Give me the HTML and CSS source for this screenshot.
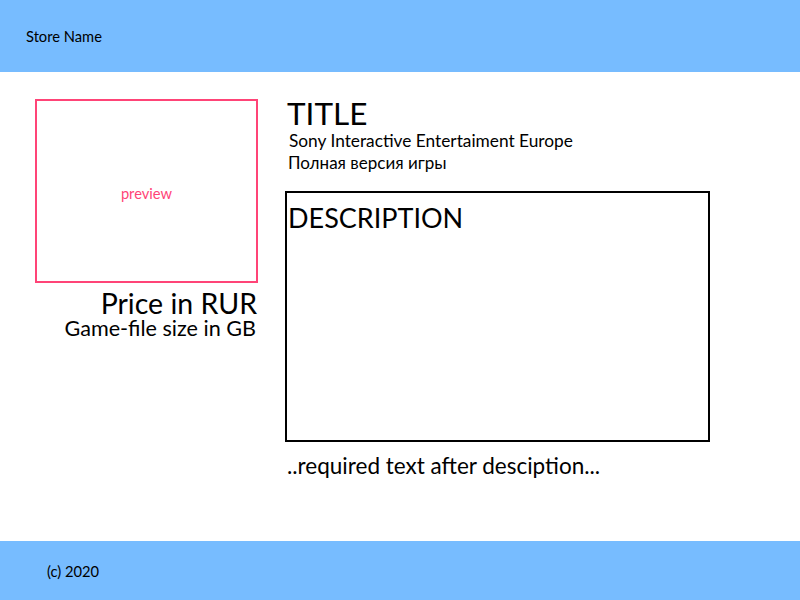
FILE: index.html
```html
<!DOCTYPE html>
<html>
<head>
<meta charset="utf-8">
<link rel="stylesheet" href="styles.css">
</head>
<body>
<div class="page">
  <header class="header">Store Name</header>
  <main class="main">
    <section class="left">
      <div class="preview">preview</div>
      <div class="price">Price in RUR</div>
      <div class="size">Game-file size in GB</div>
    </section>
    <section class="right">
      <h1 class="title">TITLE</h1>
      <div class="publisher">Sony Interactive Entertaiment Europe</div>
      <div class="edition">Полная версия игры</div>
      <div class="description">DESCRIPTION</div>
      <div class="after">..required text after desciption...</div>
    </section>
  </main>
  <footer class="footer">(c) 2020</footer>
</div>
</body>
</html>
```
FILE: styles.css
```css
html, body {
  margin: 0;
  padding: 0;
  background: #ffffff;
}
body {
  font-family: Lato, "Open Sans", "Noto Sans", sans-serif;
  color: #000;
}
.page {
  width: 800px;
  height: 600px;
  display: flex;
  flex-direction: column;
}
.header {
  height: 72px;
  background: #77bcff;
  display: flex;
  align-items: center;
  padding-left: 26px;
  font-size: 14.7px;
}
.main {
  flex: 1;
  display: flex;
  padding-left: 35px;
}
.left {
  width: 223px;
  padding-top: 27px;
  display: flex;
  flex-direction: column;
  align-items: flex-end;
}
.preview {
  box-sizing: border-box;
  width: 223px;
  height: 184px;
  border: 2px solid #ff4477;
  color: #ff4477;
  font-size: 14.7px;
  padding-top: 4px;
  display: flex;
  align-items: center;
  justify-content: center;
  align-self: stretch;
}
.price {
  font-size: 28.5px;
  line-height: 28px;
  margin-top: 6px;
  margin-right: 1px;
}
.size {
  font-size: 21.6px;
  line-height: 22px;
  margin-right: 2px;
}
.right {
  margin-left: 27px;
  padding-top: 24px;
  display: flex;
  flex-direction: column;
}
.title {
  margin: 0 0 0 2px;
  font-weight: normal;
  font-size: 31.5px;
  line-height: 34px;
}
.publisher {
  font-size: 17.3px;
  line-height: 22px;
  margin-left: 4px;
}
.edition {
  font-size: 17px;
  line-height: 22px;
  margin-left: 3px;
}
.description {
  box-sizing: border-box;
  width: 425px;
  height: 251px;
  margin-top: 17px;
  border: 2px solid #000;
  font-size: 27px;
  line-height: 34px;
  padding-left: 1px;
  padding-top: 8px;
}
.after {
  font-size: 22.5px;
  line-height: 26px;
  margin-top: 11px;
  margin-left: 2px;
}
.footer {
  height: 59px;
  background: #77bcff;
  display: flex;
  align-items: center;
  padding-left: 47px;
  font-size: 14.7px;
}
```
